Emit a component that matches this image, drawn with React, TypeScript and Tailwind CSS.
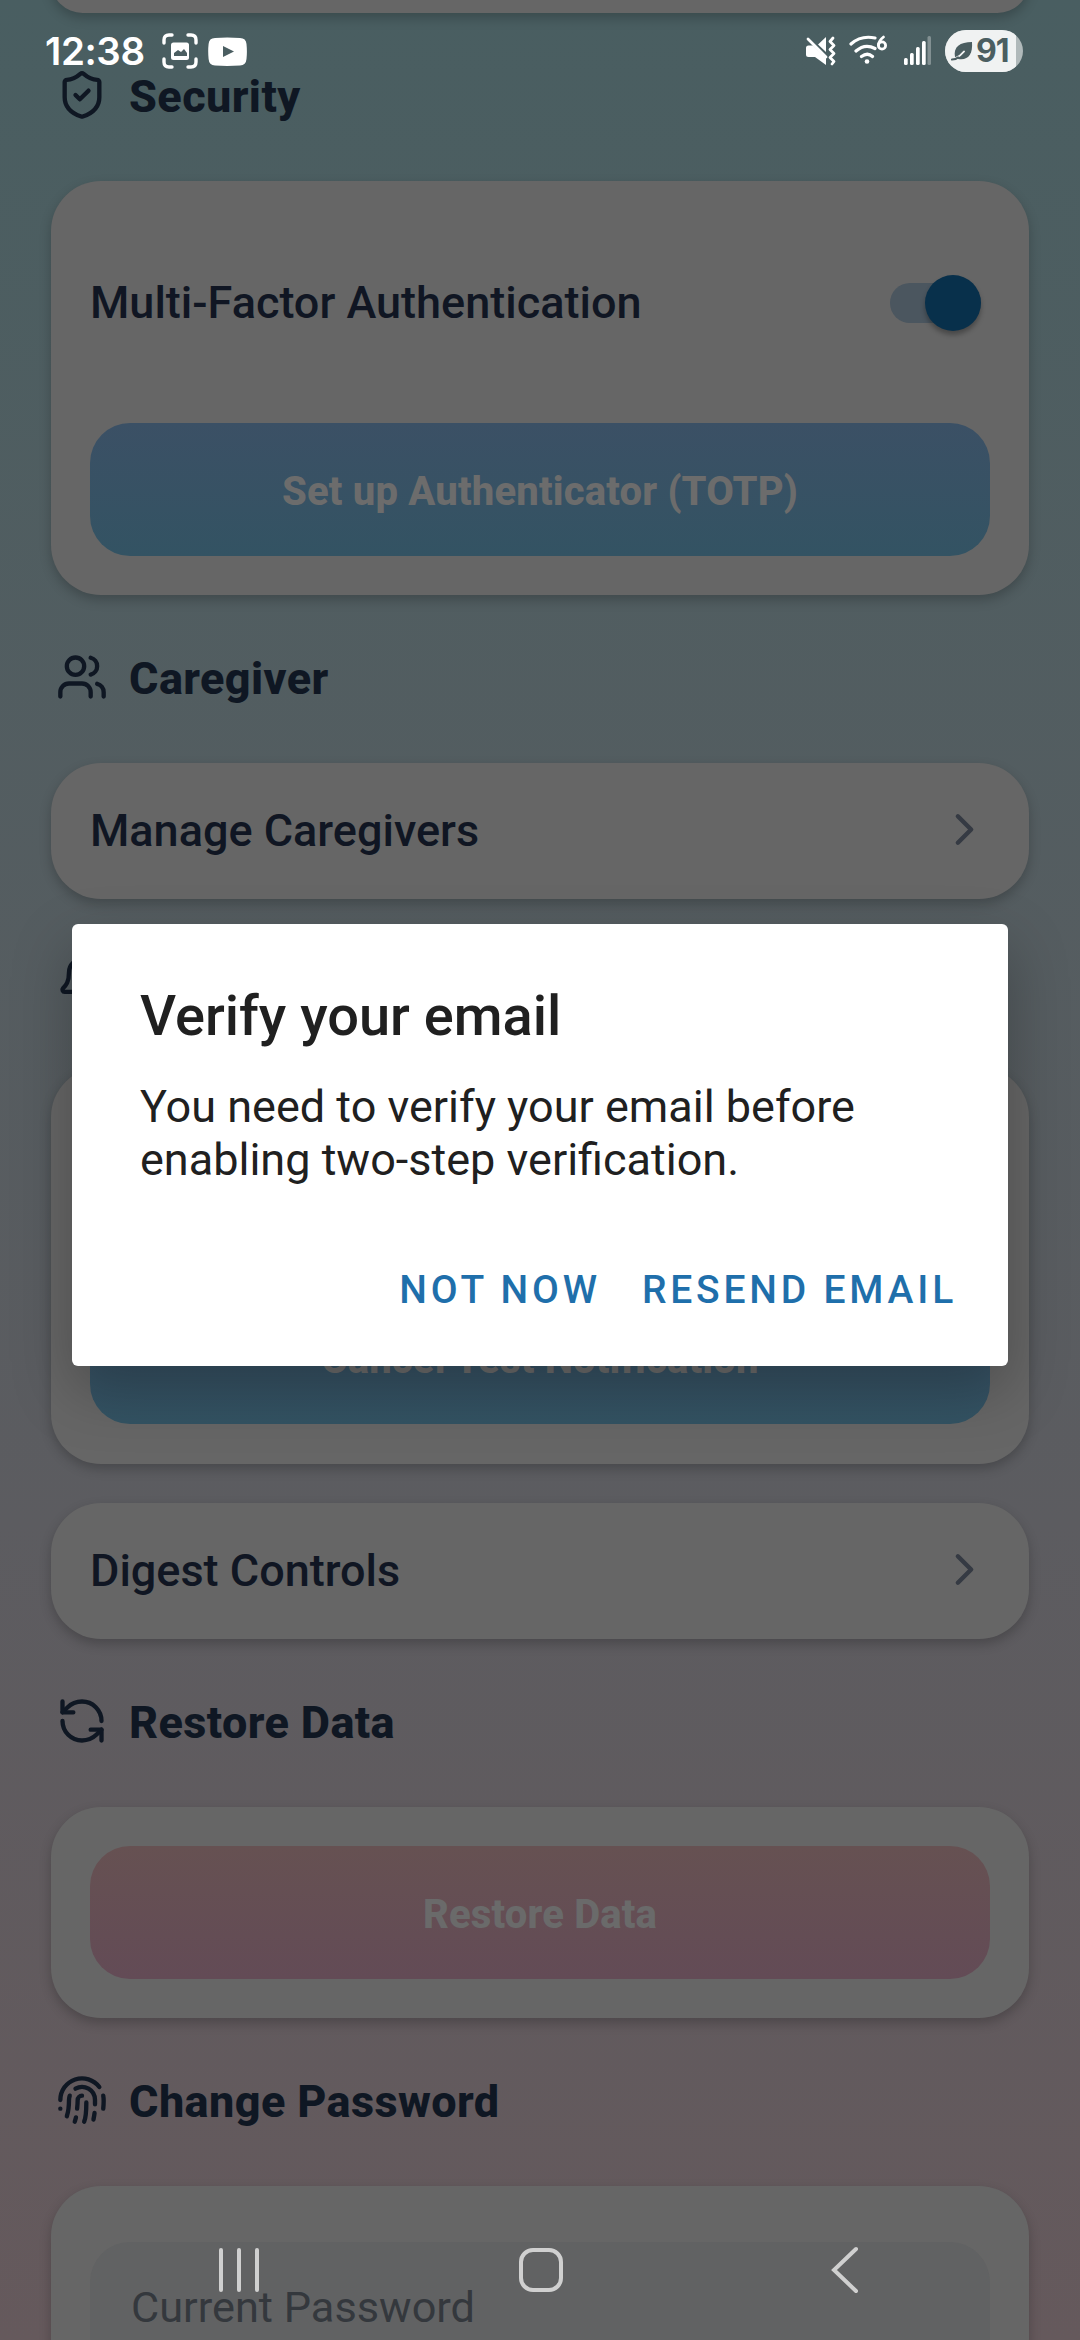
import React from "react";
import { ShieldCheck, Users, Bell, RefreshCcw, Fingerprint, ChevronRight } from "lucide-react";

const card = "mx-[51px] shrink-0 rounded-[50px] bg-[#666666] shadow-[0_5px_12px_rgba(0,0,0,0.22)]";
const rowText = "text-[45px] leading-[60px] font-medium text-[#101623]";
const blueButton =
  "flex h-[133px] shrink-0 items-center justify-center rounded-[40px] bg-linear-to-b from-[#3b5065] to-[#335363] pt-[5px] text-[40px] font-extrabold tracking-[0.17px] text-[#6c6c6c]";

function Heading({ icon: Icon, title }: { icon: React.ElementType; title: string }) {
  return (
    <div className="flex h-[60px] shrink-0 items-center pl-[56px]">
      <Icon className="-mt-[5px] size-[52px]" color="#0f1723" strokeWidth={2} />
      <span className="ml-[21px] text-[45px] font-extrabold tracking-[0.4px] text-[#0f1723]">{title}</span>
    </div>
  );
}

function LinkRow({ title }: { title: string }) {
  return (
    <div className={`${card} flex h-[136px] items-center justify-between pl-[39px] pr-[38px]`}>
      <span className={rowText}>{title}</span>
      <ChevronRight className="-mt-[3px] size-[53px]" color="#353a43" strokeWidth={2} />
    </div>
  );
}

function StatusBar() {
  return (
    <div className="absolute inset-x-0 top-0 flex h-[102px] items-center text-white">
      <span className="ml-[45px] w-[100px] pt-px font-['Inter'] text-[38.500px] font-semibold tracking-[-0.4px]">12:38</span>
      <svg className="ml-[17px] size-[36px]" viewBox="0 0 36 36" fill="none">
        <path d="M2 10V7q0-5 5-5h3M26 2h3q5 0 5 5v3M34 26v3q0 5-5 5h-3M10 34H7q-5 0-5-5v-3" stroke="white" strokeWidth="3.400" strokeLinecap="round" />
        <rect x="9" y="9.500" width="18" height="17.500" rx="2.500" fill="white" />
        <path d="M12 23v-3l4-3 3 2 3-3 3 4v3z" fill="#4b5e61" />
      </svg>
      <svg className="ml-[10px] h-[29px] w-[39px]" viewBox="0 0 39 29">
        <path d="M7 1Q19 0 32 1q6 0 6.500 6 .8 8 0 15-.5 6-6.500 6.500-13 .8-25 0Q1 28 .6 22-.2 14 .6 7 1 1 7 1z" fill="white" />
        <path d="M15 9l11 5.500L15 20z" fill="#4b5e61" />
      </svg>
      <div className="flex-1" />
      <svg className="h-[32px] w-[32px]" viewBox="0 0 32 32" fill="none">
        <path d="M21 2v15L13 9.500zM1 13q0-2.500 2.500-2.500H8L21 23v7L10 22H3.500Q1 22 1 19.500z" fill="white" />
        <path d="M3 4l18 18" stroke="white" strokeWidth="2.800" strokeLinecap="round" />
        <path d="M28 3l-3 3.500 4 4-4 4 4 4-4 4 4 4-2 2.500" stroke="white" strokeWidth="2.800" strokeLinecap="round" strokeLinejoin="round" />
      </svg>
      <svg className="ml-[12px] h-[32px] w-[40px]" viewBox="0 0 40 32" fill="none">
        <path d="M2 9Q12 0 26 3M7 16q9-8 19-2.500M12.500 21.500q6-4.500 11 0" stroke="white" strokeWidth="3.200" strokeLinecap="round" />
        <circle cx="18" cy="26.500" r="2.300" fill="white" />
        <path d="M34.500 2q-5 4-5 8" stroke="white" strokeWidth="2.800" strokeLinecap="round" />
        <circle cx="33" cy="10.500" r="3.600" stroke="white" strokeWidth="2.800" />
      </svg>
      <svg className="ml-[15px] h-[32px] w-[28px]" viewBox="0 0 28 32">
        <rect x="0" y="23" width="3.700" height="7" rx="1.500" fill="white" />
        <rect x="6" y="18" width="3.700" height="12" rx="1.500" fill="white" />
        <rect x="12" y="12" width="3.700" height="18" rx="1.500" fill="white" />
        <rect x="18" y="6" width="3.700" height="24" rx="1.500" fill="white" />
        <rect x="23.500" y="1" width="3.500" height="29" rx="1.500" fill="#829092" />
      </svg>
      <div className="mr-[57px] ml-[13px] flex h-[42px] w-[78px] items-center overflow-hidden rounded-full bg-[#b0b9ba]">
        <div className="flex h-full w-[71px] items-center bg-[#f0f2f2] pl-[6px]">
          <svg className="h-[20px] w-[22px] shrink-0" viewBox="0 0 22 20" fill="none">
            <path d="M4 16C2 6 9 1 21 1c1 12-4 19-14 17z" fill="#4b5e61" />
            <path d="M4 17.500q5-2 9-7" stroke="#f0f2f2" strokeWidth="2" strokeLinecap="round" />
            <path d="M1 18.500q4 0 6-2" stroke="#4b5e61" strokeWidth="2.200" strokeLinecap="round" />
          </svg>
          <span className="ml-[3px] font-['Inter'] text-[32px] leading-[42px] font-bold tracking-[-1px] text-[#4b5e61]">91</span>
        </div>
      </div>
    </div>
  );
}

function NavigationBar() {
  return (
    <div className="absolute inset-x-0 bottom-0 flex h-[140px] items-center">
      <svg className="ml-[218px] h-[46px] w-[44px]" viewBox="0 0 44 46">
        <path d="M3 3v40M21 3v40M39 3v40" stroke="#d0d0d0" strokeWidth="4" strokeLinecap="round" />
      </svg>
      <svg className="ml-[256px] size-[46px]" viewBox="0 0 46 46" fill="none">
        <rect x="3" y="3" width="40" height="40" rx="12" stroke="#d0d0d0" strokeWidth="4" />
      </svg>
      <svg className="ml-[266px] h-[48px] w-[30px]" viewBox="0 0 30 48" fill="none">
        <path d="M26 3L4 24l22 21" stroke="#d0d0d0" strokeWidth="4" strokeLinecap="round" />
      </svg>
    </div>
  );
}

export default function App() {
  return (
    <div className="relative h-[2340px] w-[1080px] overflow-hidden bg-linear-to-b from-[#495e61] via-[#5c5c60] via-65% to-[#65595c] font-['Roboto',sans-serif]">
      <div className="flex h-full flex-col">
        <div className={`${card} h-[63px] -mt-[50px]`} />
        <div className="h-[54px] shrink-0" />
        <Heading icon={ShieldCheck} title="Security" />
        <div className="h-[54px] shrink-0" />
        <div className={`${card} flex h-[414px] flex-col px-[39px] pt-[92px]`}>
          <div className="flex h-[60px] items-center justify-between">
            <span className={rowText}>Multi-Factor Authentication</span>
            <div className="mr-[9px] flex h-[40px] w-[91px] items-center rounded-full bg-[#4b565f]">
              <div className="ml-[35px] size-[56px] shrink-0 rounded-full bg-[#08304b] shadow-[0_4px_5px_rgba(0,0,0,0.3)]" />
            </div>
          </div>
          <div className={`${blueButton} mt-[90px]`}>Set up Authenticator (TOTP)</div>
        </div>
        <div className="h-[54px] shrink-0" />
        <Heading icon={Users} title="Caregiver" />
        <div className="h-[54px] shrink-0" />
        <LinkRow title="Manage Caregivers" />
        <div className="h-[54px] shrink-0" />
        <Heading icon={Bell} title="" />
        <div className="h-[54px] shrink-0" />
        <div className={`${card} flex h-[397px] flex-col justify-end px-[39px] pb-[40px]`}>
          <div className={blueButton}>Cancel Test Notification</div>
        </div>
        <div className="h-[39px] shrink-0" />
        <LinkRow title="Digest Controls" />
        <div className="h-[54px] shrink-0" />
        <Heading icon={RefreshCcw} title="Restore Data" />
        <div className="h-[54px] shrink-0" />
        <div className={`${card} h-[211px] px-[39px] pt-[39px]`}>
          <div className="flex h-[133px] items-center justify-center rounded-[40px] bg-linear-to-b from-[#665152] to-[#634b56] pt-[5px] text-[40px] font-extrabold tracking-[0.17px] text-[#6a6a6a]">
            Restore Data
          </div>
        </div>
        <div className="h-[54px] shrink-0" />
        <Heading icon={Fingerprint} title="Change Password" />
        <div className="h-[54px] shrink-0" />
        <div className={`${card} h-[300px] px-[39px] pt-[56px]`}>
          <div className="flex h-[133px] items-center rounded-[40px] bg-[#616263] pl-[41px] text-[43.300px] text-[#34383d]">
            Current Password
          </div>
        </div>
      </div>
      <div className="absolute top-[924px] left-[72px] flex h-[442px] w-[936px] flex-col rounded-[6px] bg-white px-[68px] text-[#202020] shadow-[0_24px_60px_rgba(0,0,0,0.26)]">
        <h1 className="mt-[57px] text-[56px] leading-[70px] font-medium">Verify your email</h1>
        <p className="mt-[29px] text-[45px] leading-[53px] whitespace-nowrap">
          You need to verify your email before
          <br />
          enabling two-step verification.
        </p>
        <div className="mt-[79px] -mr-[17px] flex h-[50px] items-center justify-end gap-[41px] text-[39px] font-medium tracking-[3.800px] whitespace-nowrap text-[#1f6fab]">
          <button>NOT NOW</button>
          <button>RESEND EMAIL</button>
        </div>
      </div>
      <StatusBar />
      <NavigationBar />
    </div>
  );
}
